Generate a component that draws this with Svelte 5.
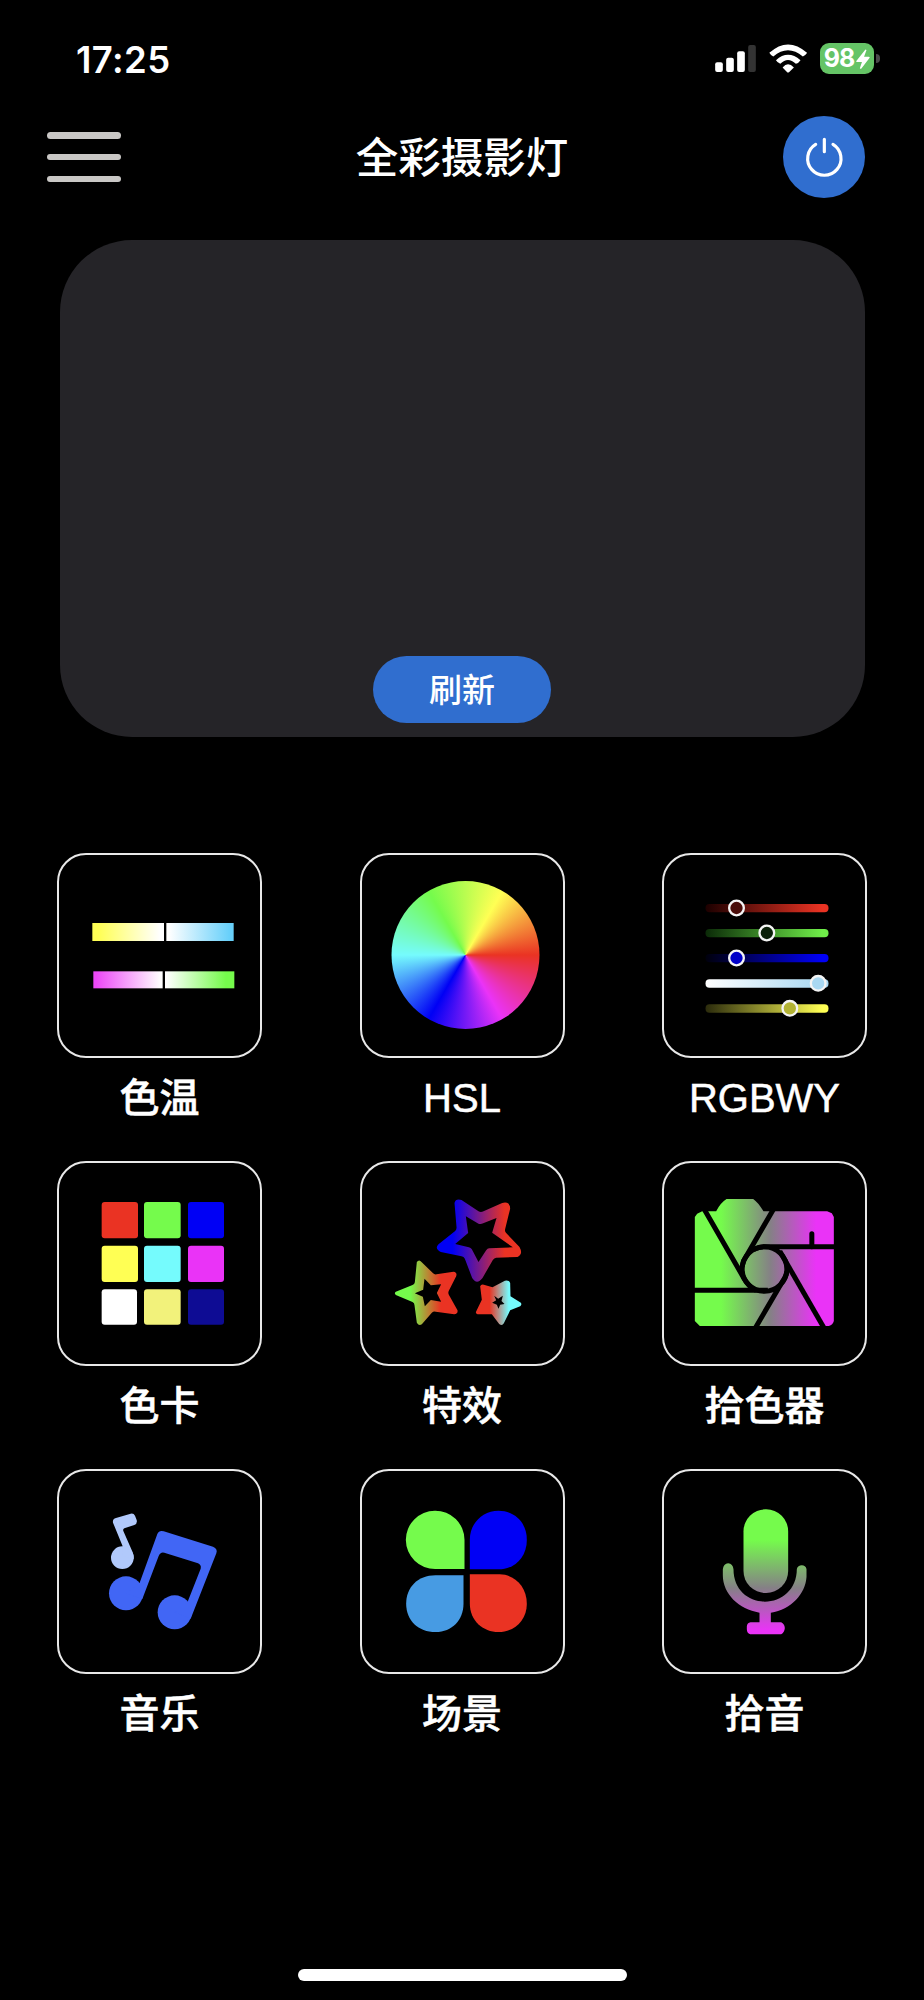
<script lang="ts">
    type Mode = { id: string; label: string; box: string };

    const modes: Mode[] = [
        { id: "cct", label: "色温", box: "57 44 603 603" },
        { id: "hsl", label: "HSL", box: "" },
        { id: "rgbwy", label: "RGBWY", box: "43.5 44 603 603" },
        { id: "swatch", label: "色卡", box: "57 38 603 603" },
        { id: "effect", label: "特效", box: "63.5 38 603 603" },
        { id: "picker", label: "拾色器", box: "43.5 38 603 603" },
        { id: "music", label: "音乐", box: "57 32 603 603" },
        { id: "scene", label: "场景", box: "63.5 32 603 603" },
        { id: "mic", label: "拾音", box: "43.5 32 603 603" },
    ];

    const sliders = [
        { y: 203, from: "#1c0000", to: "#ea3323", knob: 261, fill: "#4a0d0a" },
        { y: 278, from: "#0b2a08", to: "#6fee49", knob: 352, fill: "#0a1f08" },
        { y: 353, from: "#00000c", to: "#0000f5", knob: 261, fill: "#0000c8" },
        { y: 429, from: "#ffffff", to: "#a9d8f2", knob: 506, fill: "#a9d8f2" },
        { y: 504, from: "#2b2b0c", to: "#ffff54", knob: 421, fill: "#b3b334" },
    ];

    const swatches = [
        { x: 185, y: 155, w: 109, h: 109, color: "#ea3323" },
        { x: 312, y: 155, w: 110, h: 109, color: "#75fb4c" },
        { x: 444, y: 155, w: 108, h: 109, color: "#0000f5" },
        { x: 185, y: 286, w: 109, h: 109, color: "#ffff54" },
        { x: 312, y: 286, w: 110, h: 109, color: "#75fbfd" },
        { x: 444, y: 286, w: 108, h: 109, color: "#ea33f7" },
        { x: 185, y: 417, w: 106, h: 106, color: "#ffffff" },
        { x: 312, y: 417, w: 110, h: 106, color: "#f2f27b" },
        { x: 444, y: 417, w: 108, h: 106, color: "#0e0c94" },
    ];

    let powered = $state(true);
</script>

<div class="screen">
    <div class="status">
        <span class="time">17:25</span>
        <div class="indicators">
            <svg class="signal" viewBox="762 135 122 81">
                <rect x="762" y="187" width="23" height="29" rx="6" />
                <rect x="795" y="173" width="23" height="43" rx="6" />
                <rect x="828" y="154" width="23" height="62" rx="6" />
                <rect class="dim" x="861" y="135" width="23" height="81" rx="6" />
            </svg>
            <svg class="wifi" viewBox="923 131 116 86">
                <path d="M924 157 Q980 106 1038 157 Q1032 166 1025 168 Q980 131 936 168 Q929 166 924 157Z" />
                <path d="M944 179 Q980 146 1018 179 Q1012 188 1004 190 Q980 167 957 190 Q949 187 944 179Z" />
                <path d="M964 201 Q980 181 998 201 L984 215 Q980 218 977 215Z" />
            </svg>
            <div class="battery">
                <span>98</span>
                <svg viewBox="1189 150 40 57">
                    <path d="M1216 151 L1190 184 Q1189 187 1192 187 L1206 187 L1200 205 Q1202 208 1205 205 L1228 175 Q1229 172 1225 172 L1212 172 L1219 153Z" />
                </svg>
            </div>
            <div class="nub"></div>
        </div>
    </div>

    <header>
        <button class="menu" aria-label="menu">
            <i></i>
            <i></i>
            <i></i>
        </button>
        <h1>全彩摄影灯</h1>
        <button class="power" aria-label="power" aria-pressed={powered} onclick={() => (powered = !powered)}>
            <svg viewBox="963 348 246 246">
                <path d="M1061 433 A50 50 0 1 0 1113 433 M1087 418 V455" />
            </svg>
        </button>
    </header>

    <section class="devices">
        <button class="refresh">刷新</button>
    </section>

    <main>
        {#each modes as mode (mode.id)}
            <div class="mode">
                <button class="tile" aria-label={mode.label}>
                    {#if mode.id === "hsl"}
                        <div class="wheel"></div>
                    {:else}
                        <svg viewBox={mode.box}>
                            {#if mode.id === "cct"}
                                <defs>
                                    <linearGradient id="warm">
                                        <stop offset="0.04" stop-color="#ffff54" />
                                        <stop offset="0.48" stop-color="#fff" />
                                        <stop offset="0.54" stop-color="#fff" />
                                        <stop offset="0.97" stop-color="#68d0fa" />
                                    </linearGradient>
                                    <linearGradient id="tint">
                                        <stop offset="0.02" stop-color="#ec48f7" />
                                        <stop offset="0.48" stop-color="#fff" />
                                        <stop offset="0.52" stop-color="#fff" />
                                        <stop offset="0.94" stop-color="#75fb4c" />
                                    </linearGradient>
                                </defs>
                                <rect x="157" y="248" width="424" height="54" fill="url(#warm)" />
                                <rect x="372" y="246" width="7" height="58" />
                                <rect x="160" y="393" width="423" height="51" fill="url(#tint)" />
                                <rect x="368" y="391" width="7" height="55" />
                            {:else if mode.id === "rgbwy"}
                                {#each sliders as s, i}
                                    <linearGradient id="slider{i}">
                                        <stop offset="0" stop-color={s.from} />
                                        <stop offset="0.95" stop-color={s.to} />
                                    </linearGradient>
                                    <rect x="168" y={s.y - 12} width="369" height="25" rx="12" fill="url(#slider{i})" />
                                    <circle cx={s.knob} cy={s.y} r="22" fill={s.fill} stroke="#f4f4f4" stroke-width="7" />
                                {/each}
                            {:else if mode.id === "swatch"}
                                {#each swatches as s}
                                    <rect x={s.x} y={s.y} width={s.w} height={s.h} rx="9" fill={s.color} />
                                {/each}
                            {:else if mode.id === "effect"}
                                <defs>
                                    <linearGradient id="starA" gradientUnits="userSpaceOnUse" x1="335" y1="0" x2="492" y2="0">
                                        <stop offset="0" stop-color="#0000f5" />
                                        <stop offset="1" stop-color="#ea3323" />
                                    </linearGradient>
                                    <linearGradient id="starB" gradientUnits="userSpaceOnUse" x1="208" y1="0" x2="300" y2="0">
                                        <stop offset="0" stop-color="#75fb4c" />
                                        <stop offset="1" stop-color="#ea3323" />
                                    </linearGradient>
                                    <linearGradient id="starC" gradientUnits="userSpaceOnUse" x1="446" y1="0" x2="504" y2="0">
                                        <stop offset="0" stop-color="#ea3323" />
                                        <stop offset="1" stop-color="#75fbfd" />
                                    </linearGradient>
                                </defs>
                                <path
                                    fill="url(#starA)"
                                    fill-rule="evenodd"
                                    d="M341 158 Q344 144 362 149 L413 183 Q420 187 428 183 L484 158 Q507 152 508 175 L493 236 Q491 243 496 248 L536 290 Q548 312 530 320 L466 322 Q460 323 456 329 L425 383 Q408 405 394 383 L372 325 Q369 319 362 318 L300 305 Q280 295 293 282 L343 242 Q348 238 347 230Z
                                    M375 198 L413 220 Q420 222 427 219 L467 203 L454 247 L516 291 L445 294 Q440 294 436 300 L413 335 L393 297 Q390 292 384 291 L343 281 L382 248Z"
                                />
                                <path
                                    fill="url(#starB)"
                                    fill-rule="evenodd"
                                    d="M228 335 Q235 326 242 335 L276 368 Q280 373 287 372 L338 364 Q350 366 346 378 L324 421 Q321 427 324 433 L350 480 Q352 491 340 492 L285 484 Q278 482 273 487 L243 522 Q234 528 228 517 L221 465 Q221 458 215 455 L165 434 Q159 429 165 424 L215 404 Q221 402 222 396Z
                                    M251 385 L270 405 L301 402 L288 428 L301 454 L270 449 L252 468 L246 439 L222 429 L247 418Z"
                                />
                                <path
                                    fill="url(#starC)"
                                    fill-rule="evenodd"
                                    d="M418 408 Q421 400 429 403 L455 411 L492 391 Q505 388 508 398 L509 438 L540 457 Q544 463 538 468 L508 480 L489 519 Q484 528 475 521 L453 492 L410 492 Q402 489 407 481 L423 448Z
                                    M460 436 L472 445 L486 436 L482 452 L491 461 L478 463 L473 475 L468 463 L454 457 L466 450Z"
                                />
                            {:else if mode.id === "picker"}
                                <linearGradient id="lens" gradientUnits="userSpaceOnUse" x1="215" y1="0" x2="500" y2="0">
                                    <stop offset="0" stop-color="#75fb4c" />
                                    <stop offset="0.52" stop-color="#858086" />
                                    <stop offset="1" stop-color="#ea33f7" />
                                </linearGradient>
                                <path
                                    fill="url(#lens)"
                                    d="M136 200 L143 190 L158 183 H200 Q212 158 231 146 H311 Q325 155 342 183 H533 L547 189 L553 200 V512 Q550 524 538 527 H151 L136 512Z"
                                />
                                <g fill="none" stroke="#000" stroke-width="15">
                                    <circle cx="345" cy="356" r="67" />
                                    <path d="M165 178 L284 385 Q300 412 320 420" />
                                    <path d="M371 178 L289 320 Q280 332 278 348" />
                                    <path d="M556 289 H345 Q328 289 312 298" />
                                    <path d="M391 303 L524 534" />
                                    <path d="M412 365 Q410 378 398 395 L318 532" />
                                    <path d="M133 420 H355" />
                                    <path d="M487 250 V289" stroke-linecap="round" />
                                </g>
                            {:else if mode.id === "music"}
                                <g fill="#b1c9fb">
                                    <circle cx="247" cy="292" r="34" />
                                    <path d="M219 187 Q217 176 228 173 L272 160 Q281 158 285 166 L290 179 Q293 189 283 194 L253 204 Q248 206 250 212 L278 276 Q282 285 281 297 L247 286 L248 258Z" />
                                </g>
                                <g fill="#4166f5">
                                    <circle cx="258" cy="399" r="51" />
                                    <circle cx="404" cy="456" r="51" />
                                    <path d="M299 367 L352 221 Q357 209 371 213 L519 259 Q534 265 529 279 L452 475 L404 456 L443 424 L482 325 Q485 314 474 309 L373 277 Q361 274 356 287 L307 416 L258 399Z" />
                                </g>
                            {:else if mode.id === "scene"}
                                <path fill="#75fb4c" d="M371 326 H284 A88 87.500 0 1 1 371 238Z" />
                                <path fill="#0000f5" d="M387 327 V238 C387 186 428 151 473 151 C518 151 558 184 558 238 C558 292 520 327 473 327Z" />
                                <path fill="#479be3" d="M368 345 H284 C230 345 196 382 196 430 C196 480 232 515 284 515 C334 515 368 478 368 430Z" />
                                <path fill="#ea3323" d="M387 342 H477 C520 342 558 378 558 430 C558 480 520 515 473 515 C426 515 387 480 387 430Z" />
                            {:else}
                                <linearGradient id="voice" gradientUnits="userSpaceOnUse" x1="0" y1="240" x2="0" y2="510">
                                    <stop offset="0" stop-color="#75fb4c" />
                                    <stop offset="0.53" stop-color="#858086" />
                                    <stop offset="1" stop-color="#ea33f7" />
                                </linearGradient>
                                <g fill="url(#voice)">
                                    <rect x="282" y="147" width="134" height="251" rx="66" />
                                    <path d="M220 327 Q222 310 236 309 Q250 310 252 327 C252 390 298 424 346 424 C396 424 442 388 442 326 Q445 315 457 315 Q468 315 471 326 V350 C468 400 425 448 364 457 V486 H395 Q405 491 406 503 Q405 516 395 522 H302 Q292 519 292 507 V498 Q293 488 303 486 H330 V457 C268 448 220 400 220 345Z" />
                                </g>
                            {/if}
                        </svg>
                    {/if}
                </button>
                <span class="label">{mode.label}</span>
            </div>
        {/each}
    </main>

    <div class="home"></div>
</div>

<style>
    :global(body) {
        background: #000;
    }

    .screen {
        box-sizing: border-box;
        width: 924px;
        height: 2000px;
        display: flex;
        flex-direction: column;
        background: #000;
        color: #fff;
        font-family: "Liberation Sans", "Noto Sans CJK SC", sans-serif;
        overflow: hidden;
    }

    button {
        padding: 0;
        border: none;
        color: inherit;
        font-family: inherit;
        cursor: pointer;
    }

    svg {
        display: block;
    }

    .status {
        display: flex;
        justify-content: space-between;
        height: 116px;
        padding: 0 44px 0 76px;
    }

    .time {
        margin-top: 38px;
        font: 600 36.500px/44px Inter, sans-serif;
        letter-spacing: 0.4px;
    }

    .indicators {
        display: flex;
        align-items: center;
        height: 31px;
        margin-top: 43px;
        fill: #fff;
    }

    .signal {
        width: 41px;
        height: 27px;
        margin-right: 13px;
    }

    .dim {
        fill: #333;
    }

    .wifi {
        width: 38.500px;
        height: 29px;
        margin-right: 13px;
    }

    .battery {
        display: flex;
        align-items: center;
        justify-content: center;
        gap: 2px;
        width: 54px;
        height: 31px;
        border-radius: 9px;
        background: #65c466;
        font: 700 25px/31px Inter, sans-serif;
        letter-spacing: -1px;
    }

    .battery svg {
        width: 14px;
        height: 20px;
    }

    .nub {
        width: 4px;
        height: 9px;
        margin-left: 2px;
        border-radius: 0 4px 4px 0;
        background: #4a4a4a;
    }

    header {
        display: flex;
        align-items: center;
        justify-content: space-between;
        height: 82px;
        padding: 0 59px 0 47px;
    }

    .menu {
        display: flex;
        flex-direction: column;
        justify-content: space-between;
        width: 74px;
        height: 50px;
        background: none;
    }

    .menu i {
        height: 6.500px;
        border-radius: 4px;
        background: #c9c7c5;
    }

    h1 {
        margin: 3px 0 0 20px;
        font-size: 42.500px;
        font-weight: 500;
        line-height: 60px;
    }

    .power {
        width: 82px;
        height: 82px;
        border-radius: 50%;
        background: #306ecf;
    }

    .power path {
        fill: none;
        stroke: #fff;
        stroke-width: 9.500;
        stroke-linecap: round;
    }

    .devices {
        box-sizing: border-box;
        display: flex;
        align-items: flex-end;
        justify-content: center;
        height: 497px;
        margin: 42px 59.500px 0;
        padding-bottom: 14px;
        border-radius: 72px;
        background: #252428;
    }

    .refresh {
        width: 178px;
        height: 67px;
        padding-top: 2px;
        border-radius: 34px;
        background: #306ecf;
        font-size: 33px;
        font-weight: 500;
        line-height: 65px;
    }

    main {
        display: grid;
        grid-template-columns: repeat(3, 205px);
        grid-auto-rows: 308px;
        justify-content: space-between;
        margin: 116px 57px 0 57px;
    }

    .mode {
        display: flex;
        flex-direction: column;
        align-items: center;
    }

    .tile {
        box-sizing: border-box;
        width: 205px;
        height: 205px;
        border: 2px solid #e8e8e8;
        border-radius: 29px;
        background: #000;
    }

    .tile svg {
        width: 201px;
        height: 201px;
    }

    .wheel {
        width: 148px;
        height: 148px;
        margin: 0 auto 1px;
        transform: translateX(3.500px);
        border-radius: 50%;
        background: conic-gradient(
            from 90deg,
            #ea3323,
            #ea33f7 60deg,
            #0000f5 120deg,
            #75fbfd 180deg,
            #75fb4c 240deg,
            #ffff54 300deg,
            #ea3323
        );
    }

    .label {
        margin-top: 12px;
        font-size: 40px;
        font-weight: 500;
        line-height: 56px;
        white-space: nowrap;
        -webkit-text-stroke: 0.5px #fff;
    }

    .home {
        width: 329px;
        height: 12px;
        margin: auto auto 19px;
        border-radius: 6px;
        background: #fff;
    }
</style>
